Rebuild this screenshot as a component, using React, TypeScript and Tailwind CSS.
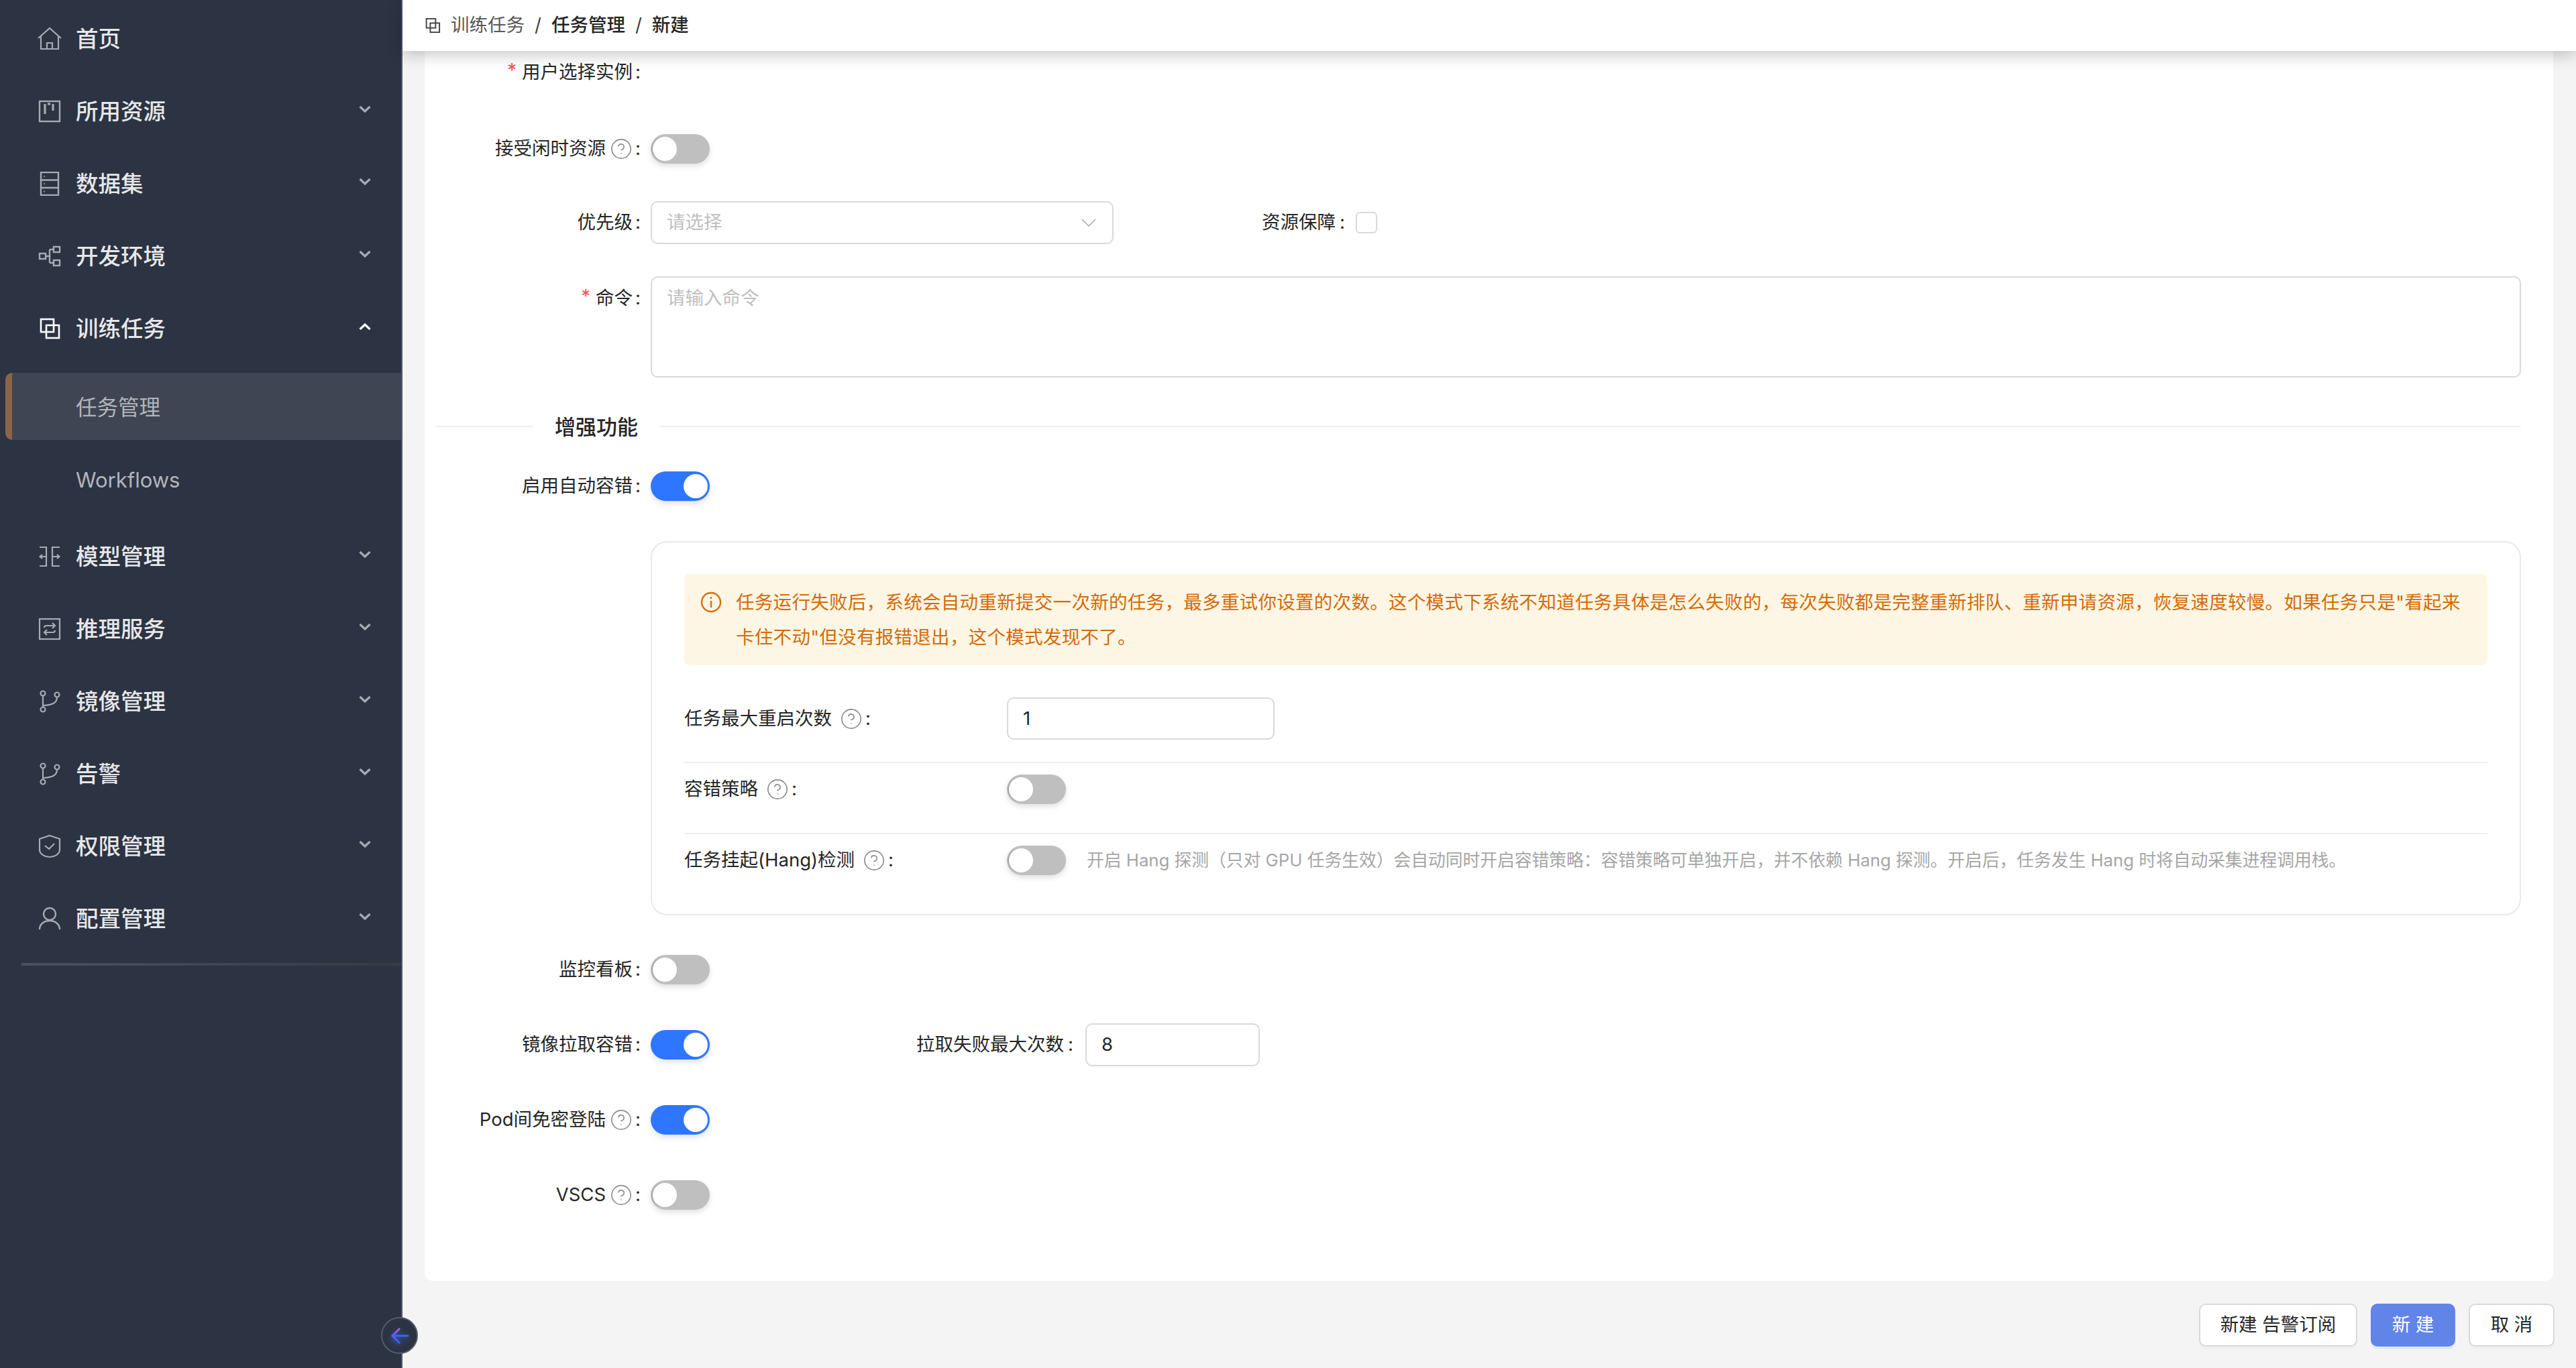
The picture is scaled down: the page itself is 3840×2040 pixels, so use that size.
import type { ReactNode } from 'react'
import { CircleHelp } from 'lucide-react'

const FONT = "font-['Inter','Noto_Sans_CJK_SC',sans-serif]"

function HomeIcon() {
  return (
    <svg width="36" height="36" viewBox="0 0 36 36" fill="none" stroke="currentColor" strokeWidth="2.2">
      <path d="M1 17 18 2l17 15" />
      <path d="M5 14v19h26V14" />
      <path d="M14 33v-9h8v9" />
    </svg>
  )
}

function BoardIcon() {
  return (
    <svg width="36" height="36" viewBox="0 0 36 36" fill="none" stroke="currentColor" strokeWidth="2.4">
      <rect x="3" y="3" width="30" height="30" />
      <path d="M11 7v15M23 7v10" strokeWidth="3.2" />
      <path d="M15 7h4" strokeWidth="3.2" />
    </svg>
  )
}

function DrawerIcon() {
  return (
    <svg width="36" height="36" viewBox="0 0 36 36" fill="none" stroke="currentColor" strokeWidth="2.4">
      <rect x="5" y="1" width="26" height="34" />
      <path d="M5 12.5h26M5 24h26" />
      <circle cx="10" cy="7" r="1" fill="currentColor" stroke="none" />
      <circle cx="10" cy="18" r="1" fill="currentColor" stroke="none" />
      <circle cx="10" cy="29.5" r="1" fill="currentColor" stroke="none" />
    </svg>
  )
}

function NodesIcon() {
  return (
    <svg width="36" height="36" viewBox="0 0 36 36" fill="none" stroke="currentColor" strokeWidth="2.4">
      <rect x="3" y="14" width="9" height="8" />
      <rect x="24" y="4" width="9" height="8" />
      <rect x="24" y="24" width="9" height="8" />
      <path d="M12 18h6M18 8v20M18 8h6M18 28h6" />
    </svg>
  )
}

function TasksIcon({ size = 36 }: { size?: number }) {
  return (
    <svg width={size} height={size} viewBox="0 0 36 36" fill="none" stroke="currentColor" strokeWidth="2.6">
      <rect x="5" y="4" width="19" height="19" />
      <rect x="13" y="13" width="19" height="19" />
    </svg>
  )
}

function ModelIcon() {
  return (
    <svg width="36" height="36" viewBox="0 0 36 36" fill="none" stroke="currentColor" strokeWidth="2.2">
      <path d="M3 4h10v28H3M13 18H4M7 15l-3.5 3L7 21" />
      <path d="M33 4H22v28h11M22 18h10M29 15l3.5 3-3.5 3" />
    </svg>
  )
}

function ServiceIcon() {
  return (
    <svg width="36" height="36" viewBox="0 0 36 36" fill="none" stroke="currentColor" strokeWidth="2.2">
      <rect x="3" y="3" width="30" height="30" />
      <path d="M10 16c0-2 1-3 3-3h13M22 9l4 4-4 4" />
      <path d="M26 20c0 2-1 3-3 3H10M14 19l-4 4 4 4" />
    </svg>
  )
}

function BranchIcon() {
  return (
    <svg width="36" height="36" viewBox="0 0 36 36" fill="none" stroke="currentColor" strokeWidth="2.2">
      <circle cx="8" cy="6" r="3.5" />
      <circle cx="8" cy="30" r="3.5" />
      <circle cx="29" cy="8" r="3.5" />
      <path d="M8 9.5v17M9 24c12-1 20-3 20-12.500" />
    </svg>
  )
}

function ShieldIcon() {
  return (
    <svg width="36" height="36" viewBox="0 0 36 36" fill="none" stroke="currentColor" strokeWidth="2.2">
      <path d="M18 2 33 7v16c0 7-8 11-15 11S3 30 3 23V7z" />
      <path d="m11 17 6 5 8-8" />
    </svg>
  )
}

function UserIcon() {
  return (
    <svg width="36" height="36" viewBox="0 0 36 36" fill="none" stroke="currentColor" strokeWidth="2.4">
      <circle cx="18" cy="11" r="9" />
      <path d="M3 34c0-8 7-13 15-13s15 5 15 13" />
    </svg>
  )
}

function Chevron({ up = false }: { up?: boolean }) {
  return (
    <svg width="18" height="12" viewBox="0 0 18 12" fill="none" stroke="currentColor" strokeWidth="3.2">
      <path d={up ? 'M1.500 10 9 3l7.500 7' : 'M1.500 2 9 9l7.500-7'} />
    </svg>
  )
}

function NavItem({ icon, label, open, noArrow, active }: { icon: ReactNode; label: string; open?: boolean; noArrow?: boolean; active?: boolean }) {
  return (
    <div className="h-[108px] flex items-center pl-[56px] pr-[45px]">
      <span className={active ? 'text-white' : 'text-[#a7abb3]'}>{icon}</span>
      <span className="ml-[21px] flex-1 text-[33.5px] font-medium text-[#e6e7e9]">{label}</span>
      {!noArrow && (
        <span className={active ? 'text-white -mt-[6px]' : 'text-[#a7abb3] -mt-[6px]'}>
          <Chevron up={open} />
        </span>
      )}
    </div>
  )
}

function Sidebar() {
  return (
    <aside className="w-[600px] shrink-0 h-full bg-[#2c3342] border-r-2 border-[#515868] pt-[4px]">
      <NavItem icon={<HomeIcon />} label="首页" noArrow />
      <NavItem icon={<BoardIcon />} label="所用资源" />
      <NavItem icon={<DrawerIcon />} label="数据集" />
      <NavItem icon={<NodesIcon />} label="开发环境" />
      <NavItem icon={<TasksIcon />} label="训练任务" open active />
      <div className="mt-[12px] ml-[8px] h-[100px] flex items-center bg-[#404553] border-l-[10px] border-[#8a6548] rounded-l-[10px] pl-[95px] pt-[3px] text-[31.5px] text-[#b3b5bb]">
        任务管理
      </div>
      <div className="mt-[10px] h-[100px] flex items-center pl-[113px] text-[31px] text-[#b3b5bb]">Workflows</div>
      <div className="h-[10px]" />
      <NavItem icon={<ModelIcon />} label="模型管理" />
      <NavItem icon={<ServiceIcon />} label="推理服务" />
      <NavItem icon={<BranchIcon />} label="镜像管理" />
      <NavItem icon={<BranchIcon />} label="告警" />
      <NavItem icon={<ShieldIcon />} label="权限管理" />
      <NavItem icon={<UserIcon />} label="配置管理" />
      <div className="mt-[12px] ml-[32px] h-[4px] bg-gradient-to-r from-[#4a505e] to-[#363c42]" />
    </aside>
  )
}

function Help({ className = '' }: { className?: string }) {
  return <CircleHelp size={34} strokeWidth={1.15} className={`text-[#8a8a8a] shrink-0 ${className}`} />
}

function Label({ text, required, help }: { text: string; required?: boolean; help?: boolean }) {
  return (
    <div className="w-[337px] pr-[15px] shrink-0 flex items-center justify-end text-[27.5px] text-[#262626]">
      {required && <span className="text-[#ff4d4f] mr-[8px] -mt-[6px]">*</span>}
      <span>{text}</span>
      {help && <Help className="ml-[6px]" />}
      <span className="ml-[4px]">:</span>
    </div>
  )
}

function Toggle({ on }: { on?: boolean }) {
  return (
    <div className={`relative w-[88px] h-[44px] shrink-0 rounded-full shadow-[0_4px_8px_rgba(0,0,0,0.12)] ${on ? 'bg-[#2e76ff]' : 'bg-[#bfbfbf]'}`}>
      <div className={`absolute top-[4px] w-[36px] h-[36px] rounded-full bg-white ${on ? 'right-[3px]' : 'left-[3px] shadow-[-2px_0_0_#a8a8a8]'}`} />
    </div>
  )
}

function Row({ className = '', children }: { className?: string; children: ReactNode }) {
  return <div className={`flex items-center h-[64px] ${className}`}>{children}</div>
}

function Input({ value, className = '' }: { value: string; className?: string }) {
  return (
    <div className={`flex items-center px-[22px] bg-white border-2 border-[#d9d9d9] rounded-[10px] text-[27.5px] text-[#262626] ${className}`}>
      {value}
    </div>
  )
}

function SubLabel({ text }: { text: string }) {
  return (
    <div className="w-[481px] shrink-0 flex items-center text-[27.5px] text-[#262626]">
      <span>{text}</span>
      <Help className="ml-[12px]" />
      <span className="ml-[4px]">:</span>
    </div>
  )
}

function FaultToleranceBox() {
  return (
    <div className="mt-[50px] ml-[337px] mr-[48px] h-[558px] border-2 border-[#e9e9e9] rounded-[24px] px-[48px] pt-[47px]">
      <div className="h-[136px] bg-[#fdf6e5] rounded-[8px] flex pl-[24px] pr-[36px] pt-[16px]">
        <svg className="shrink-0 mt-[10px] text-[#d9700c]" width="32" height="32" viewBox="0 0 32 32" fill="none" stroke="currentColor" strokeWidth="2.4">
          <circle cx="16" cy="16" r="14" />
          <path d="M16 14v10M16 8v3" />
        </svg>
        <p className="ml-[21px] text-[27.5px] tracking-[0.3px] leading-[52px] text-[#d46b08]">
          任务运行失败后，系统会自动重新提交一次新的任务，最多重试你设置的次数。这个模式下系统不知道任务具体是怎么失败的，每次失败都是完整重新排队、重新申请资源，恢复速度较慢。如果任务只是"看起来卡住不动"但没有报错退出，这个模式发现不了。
        </p>
      </div>
      <div className="mt-[48px] flex items-center h-[63px]">
        <SubLabel text="任务最大重启次数" />
        <Input value="1" className="w-[399px] h-[63px]" />
      </div>
      <div className="mt-[33px] h-[2px] bg-[#f0f0f0]" />
      <div className="mt-[17px] flex items-center h-[44px]">
        <SubLabel text="容错策略" />
        <Toggle />
      </div>
      <div className="mt-[43px] h-[2px] bg-[#f0f0f0]" />
      <div className="mt-[17px] flex items-center h-[44px]">
        <SubLabel text="任务挂起(Hang)检测" />
        <Toggle />
        <span className="ml-[31px] text-[25.75px] text-[#a6a6a6] whitespace-nowrap">
          开启 Hang 探测（只对 GPU 任务生效）会自动同时开启容错策略：容错策略可单独开启，并不依赖 Hang 探测。开启后，任务发生 Hang 时将自动采集进程调用栈。
        </span>
      </div>
    </div>
  )
}

function FormCard() {
  return (
    <div className="mr-[34px] ml-[33px] h-[1834px] bg-white rounded-b-[12px] overflow-hidden">
      <Row>
        <Label text="用户选择实例" required />
      </Row>
      <Row className="mt-[50px]">
        <Label text="接受闲时资源" help />
        <Toggle />
      </Row>
      <Row className="mt-[46px]">
        <Label text="优先级" />
        <div className="w-[690px] h-[64px] flex items-center justify-between pl-[22px] pr-[24px] border-2 border-[#d9d9d9] rounded-[10px] text-[27.5px] text-[#bfbfbf]">
          请选择
          <svg width="22" height="14" viewBox="0 0 22 14" fill="none" stroke="#a8a8a8" strokeWidth="1.5">
            <path d="m1 2 10 10L21 2" />
          </svg>
        </div>
        <div className="ml-[221px] text-[27.5px] text-[#262626] flex items-center">
          资源保障<span className="ml-[6px]">:</span>
        </div>
        <div className="ml-[16px] w-[32px] h-[32px] border-2 border-[#d9d9d9] rounded-[6px]" />
      </Row>
      <div className="mt-[48px] flex">
        <div className="pt-[12px]">
          <Label text="命令" required />
        </div>
        <div className="mr-[48px] flex-1 h-[151px] border-2 border-[#d9d9d9] rounded-[10px] px-[22px] pt-[10px] text-[27.5px] text-[#bfbfbf]">
          请输入命令
        </div>
      </div>
      <div className="mt-[47px] flex items-center h-[52px] ml-[16px] mr-[48px]">
        <div className="w-[146px] h-[2px] bg-[#f0f0f0]" />
        <span className="mx-[32px] text-[31px] font-medium text-[#262626] leading-none">增强功能</span>
        <div className="flex-1 h-[2px] bg-[#f0f0f0]" />
      </div>
      <Row className="mt-[31px]">
        <Label text="启用自动容错" />
        <Toggle on />
      </Row>
      <FaultToleranceBox />
      <Row className="mt-[49px]">
        <Label text="监控看板" />
        <Toggle />
      </Row>
      <Row className="mt-[48px]">
        <Label text="镜像拉取容错" />
        <Toggle on />
        <div className="w-[560px] pr-[18px] flex justify-end text-[27.5px] text-[#262626]">
          拉取失败最大次数<span className="ml-[6px]">:</span>
        </div>
        <Input value="8" className="w-[260px] h-[64px]" />
      </Row>
      <Row className="mt-[48px]">
        <Label text="Pod间免密登陆" help />
        <Toggle on />
      </Row>
      <Row className="mt-[48px]">
        <Label text="VSCS" help />
        <Toggle />
      </Row>
    </div>
  )
}

export default function App() {
  return (
    <div className={`relative flex h-screen overflow-hidden bg-[#f4f4f5] ${FONT}`}>
      <Sidebar />
      <main className="flex-1 min-w-0 flex flex-col">
        <header className="relative z-10 h-[76px] shrink-0 bg-white shadow-[0_6px_22px_rgba(0,0,0,0.22)] flex items-center pl-[32px] text-[27.5px] text-[#595959]">
          <span className="text-[#404040]">
            <TasksIcon size={26} />
          </span>
          <span className="ml-[14px]">训练任务</span>
          <span className="mx-[15px] text-[#404040]">/</span>
          <span className="font-medium text-[#262626]">任务管理</span>
          <span className="mx-[15px] text-[#404040]">/</span>
          <span className="font-medium text-[#262626]">新建</span>
        </header>
        <FormCard />
        <div className="pt-[34px] pr-[32px] flex justify-end gap-[20px] text-[27.5px]">
          <button className="w-[236px] h-[64px] bg-white border-2 border-[#d9d9d9] rounded-[10px] text-[#262626] shadow-[0_4px_0_rgba(0,0,0,0.02)]">
            新建 告警订阅
          </button>
          <button className="w-[126px] h-[64px] bg-[#6184e8] rounded-[10px] text-white shadow-[0_4px_0_rgba(24,144,255,0.1)]">
            新 建
          </button>
          <button className="w-[128px] h-[64px] bg-white border-2 border-[#d9d9d9] rounded-[10px] text-[#262626] shadow-[0_4px_0_rgba(0,0,0,0.02)]">
            取 消
          </button>
        </div>
      </main>
      <div className="absolute left-[568px] top-[1964px] w-[55px] h-[55px] rounded-full bg-[#2c3342] border-2 border-[#555a68] flex items-center justify-center">
        <svg className="drop-shadow-[0_3px_4px_rgba(80,120,255,0.6)]" width="28" height="24" viewBox="0 0 30 26" fill="none" strokeWidth="3.2" strokeLinecap="round">
          <defs>
            <linearGradient id="collapse-arrow" x1="0" y1="0" x2="0" y2="1">
              <stop offset="0" stopColor="#a855f7" />
              <stop offset="1" stopColor="#2563ff" />
            </linearGradient>
          </defs>
          <path d="M14 2 3 13l11 11" stroke="url(#collapse-arrow)" />
          <path d="M5 13h23" stroke="#2a6bff" />
        </svg>
      </div>
    </div>
  )
}
